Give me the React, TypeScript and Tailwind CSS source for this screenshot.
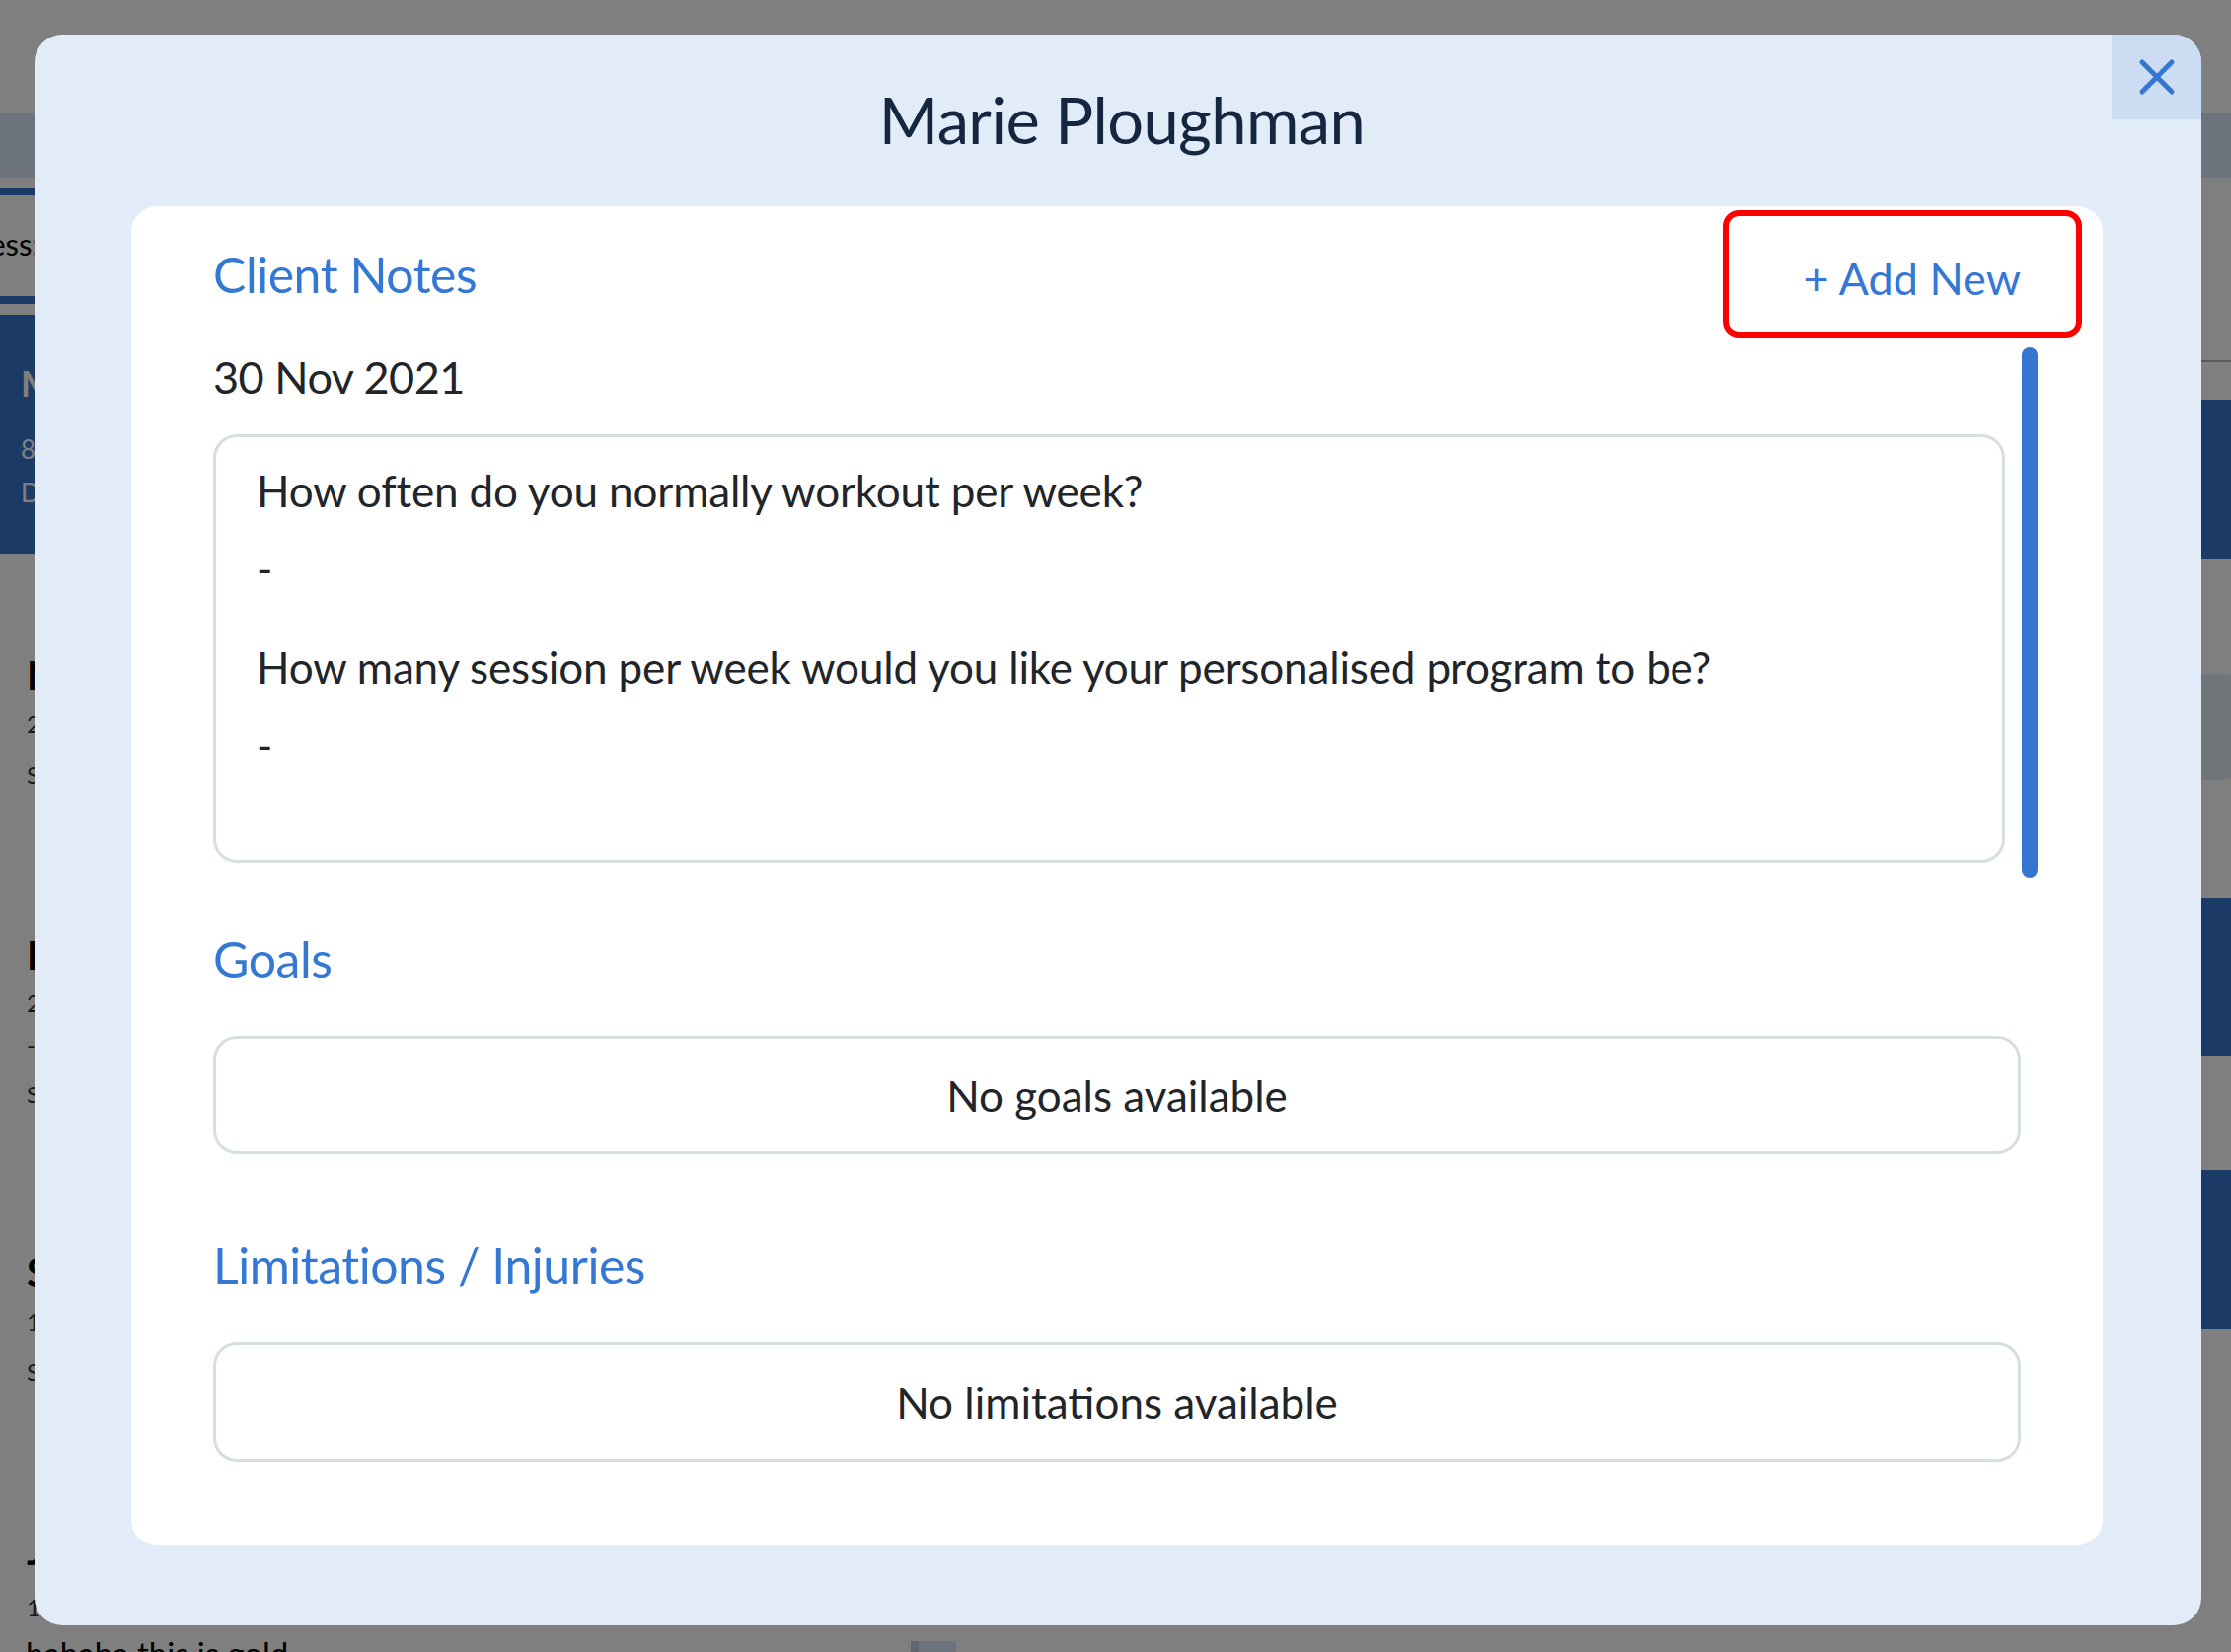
const sans = "font-['Lato','Noto_Sans',sans-serif]";

function CloseIcon() {
	return (
		<svg width="40" height="40" viewBox="0 0 40 40" fill="none">
			<path d="M5 5 L35 35 M35 5 L5 35" stroke="#3477d0" strokeWidth="5" strokeLinecap="round" />
		</svg>
	);
}

function BackgroundPage() {
	return (
		<div className="flex h-full flex-col">
			<div className="h-[115px] shrink-0" />
			<div className="h-[65px] shrink-0 bg-[#d8e6fa]" />
			<div className="flex flex-1">
				<aside className="flex w-[420px] flex-col text-black">
					<div className="mt-[10px] h-[8px] bg-[#3874cc]" />
					<p className="-ml-[84px] mt-[33px] whitespace-nowrap text-[31px] leading-[32px]">Progress:</p>
					<div className="mt-[37px] h-[8px] bg-[#3874cc]" />
					<div className="mt-[11px] flex h-[242px] flex-col bg-[#3874cc] px-[21px] pt-[49px] text-white">
						<p className="text-[36px] font-bold leading-[40px]">Marie Ploughman</p>
						<p className="mt-[33px] text-[26px] leading-[28px]">8 sessions</p>
						<p className="mt-[16px] text-[26px] leading-[28px]">Due today</p>
					</div>

					<div className="px-[27px]">
						<p className="mt-[101px] text-[40px] font-bold leading-[44px]">Nathan Brooks</p>
						<p className="mt-[14px] text-[24px] leading-[28px] text-[#333]">2 Dec 2021</p>
						<p className="mt-[23px] text-[24px] leading-[28px] text-[#333]">Strength</p>

						<p className="mt-[147px] text-[40px] font-bold leading-[44px]">Daniel Hart</p>
						<p className="mt-[12px] text-[24px] leading-[28px] text-[#333]">2 Dec 2021</p>
						<p className="mt-[15px] text-[24px] leading-[28px] text-[#333]">-</p>
						<p className="mt-[22px] text-[24px] leading-[28px] text-[#333]">Strength</p>

						<p className="mt-[144px] text-[40px] font-bold leading-[44px]">Sarah Collins</p>
						<p className="mt-[15px] text-[24px] leading-[28px] text-[#333]">1 Dec 2021</p>
						<p className="mt-[22px] text-[24px] leading-[28px] text-[#333]">Strength</p>

						<p className="mt-[145px] text-[40px] font-bold leading-[44px]">James Carter</p>
						<p className="mt-[22px] text-[24px] leading-[28px] text-[#333]">1 Dec 2021</p>
						<p className="-ml-[1px] mt-[14px] whitespace-nowrap text-[33px] leading-[36px]">hahaha this is gold</p>
					</div>
				</aside>
				<main className="flex flex-1 items-end">
					<div className="mb-[-30px] ml-[503px] h-[60px] w-[46px] border-l-[8px] border-[#bfccdf] bg-[#d8e6fa]" />
				</main>
				<aside className="flex w-[260px] flex-col">
					<div className="mt-[185px] h-[2px] bg-[#b4b4b4]" />
					<div className="mt-[38px] h-[161px] bg-[#3874cc]" />
					<div className="ml-[60px] mt-[117px] h-[107px] w-[240px] rounded-full bg-[#e0eaf4]" />
					<div className="mt-[120px] h-[160px] bg-[#3874cc]" />
					<div className="mt-[116px] h-[161px] bg-[#3874cc]" />
				</aside>
			</div>
		</div>
	);
}

function ClientModal() {
	return (
		<div className="relative flex h-[1612px] w-[2196px] flex-col overflow-hidden rounded-[28px] bg-[#e2ebf8]">
			<button className="absolute right-0 top-0 flex h-[86px] w-[91px] items-center justify-center bg-[#ccdcf2]">
				<CloseIcon />
			</button>
			<h1 className="pl-[8px] pt-[52px] text-center text-[65px] leading-[68px] tracking-[-0.6px] text-[#142640]">
				Marie Ploughman
			</h1>

			<section className="mx-[98px] mt-[54px] flex h-[1357px] w-[1998px] flex-col rounded-[26px] bg-white px-[83px] pt-[4px]">
				<div className="-mr-[62px] flex items-start justify-between">
					<h2 className="mt-[39px] text-[50px] leading-[53px] tracking-[-0.5px] text-[#3478d4]">Client Notes</h2>
					<button className="flex h-[129px] w-[364px] items-center justify-end rounded-[16px] border-[6px] border-[#ff0000] pr-[56px] pt-[8px] text-[45px] leading-[48px] text-[#3478d4]">
						+ Add New
					</button>
				</div>

				<div className="-mr-[17px] mt-[10px] flex gap-[17px]">
					<div className="flex flex-1 flex-col">
						<p className="mt-[5px] text-[45px] leading-[50px] tracking-[-0.5px] text-[#212529]">30 Nov 2021</p>
						<div className="mt-[33px] h-[434px] rounded-[24px] border-[3px] border-[#d6dfe0] px-[41px] pt-[21px] text-[44px] leading-[67px] tracking-[-0.15px] text-[#212529]">
							<p className="mb-[12px]">How often do you normally workout per week?</p>
							<p className="mb-[33px]">-</p>
							<p className="mb-[12px]">How many session per week would you like your personalised program to be?</p>
							<p>-</p>
						</div>
					</div>
					<div className="h-[538px] w-[16px] rounded-full bg-[#3477d0]" />
				</div>

				<h2 className="mt-[56px] text-[50px] leading-[53px] tracking-[-0.5px] text-[#3478d4]">Goals</h2>
				<div className="mt-[51px] flex h-[119px] items-center justify-center rounded-[24px] border-[3px] border-[#d6dfe0] text-[44px] text-[#212529]">
					No goals available
				</div>

				<h2 className="mt-[87px] text-[50px] leading-[53px] tracking-[-0.5px] text-[#3478d4]">Limitations / Injuries</h2>
				<div className="mt-[51px] flex h-[121px] items-center justify-center rounded-[24px] border-[3px] border-[#d6dfe0] text-[44px] text-[#212529]">
					No limitations available
				</div>
			</section>
		</div>
	);
}

export default function App() {
	return (
		<div className={`relative h-[1674px] w-[2261px] overflow-hidden bg-white ${sans}`}>
			<BackgroundPage />
			<div className="absolute inset-0 bg-black/50 pl-[35px] pt-[35px]">
				<ClientModal />
			</div>
		</div>
	);
}
